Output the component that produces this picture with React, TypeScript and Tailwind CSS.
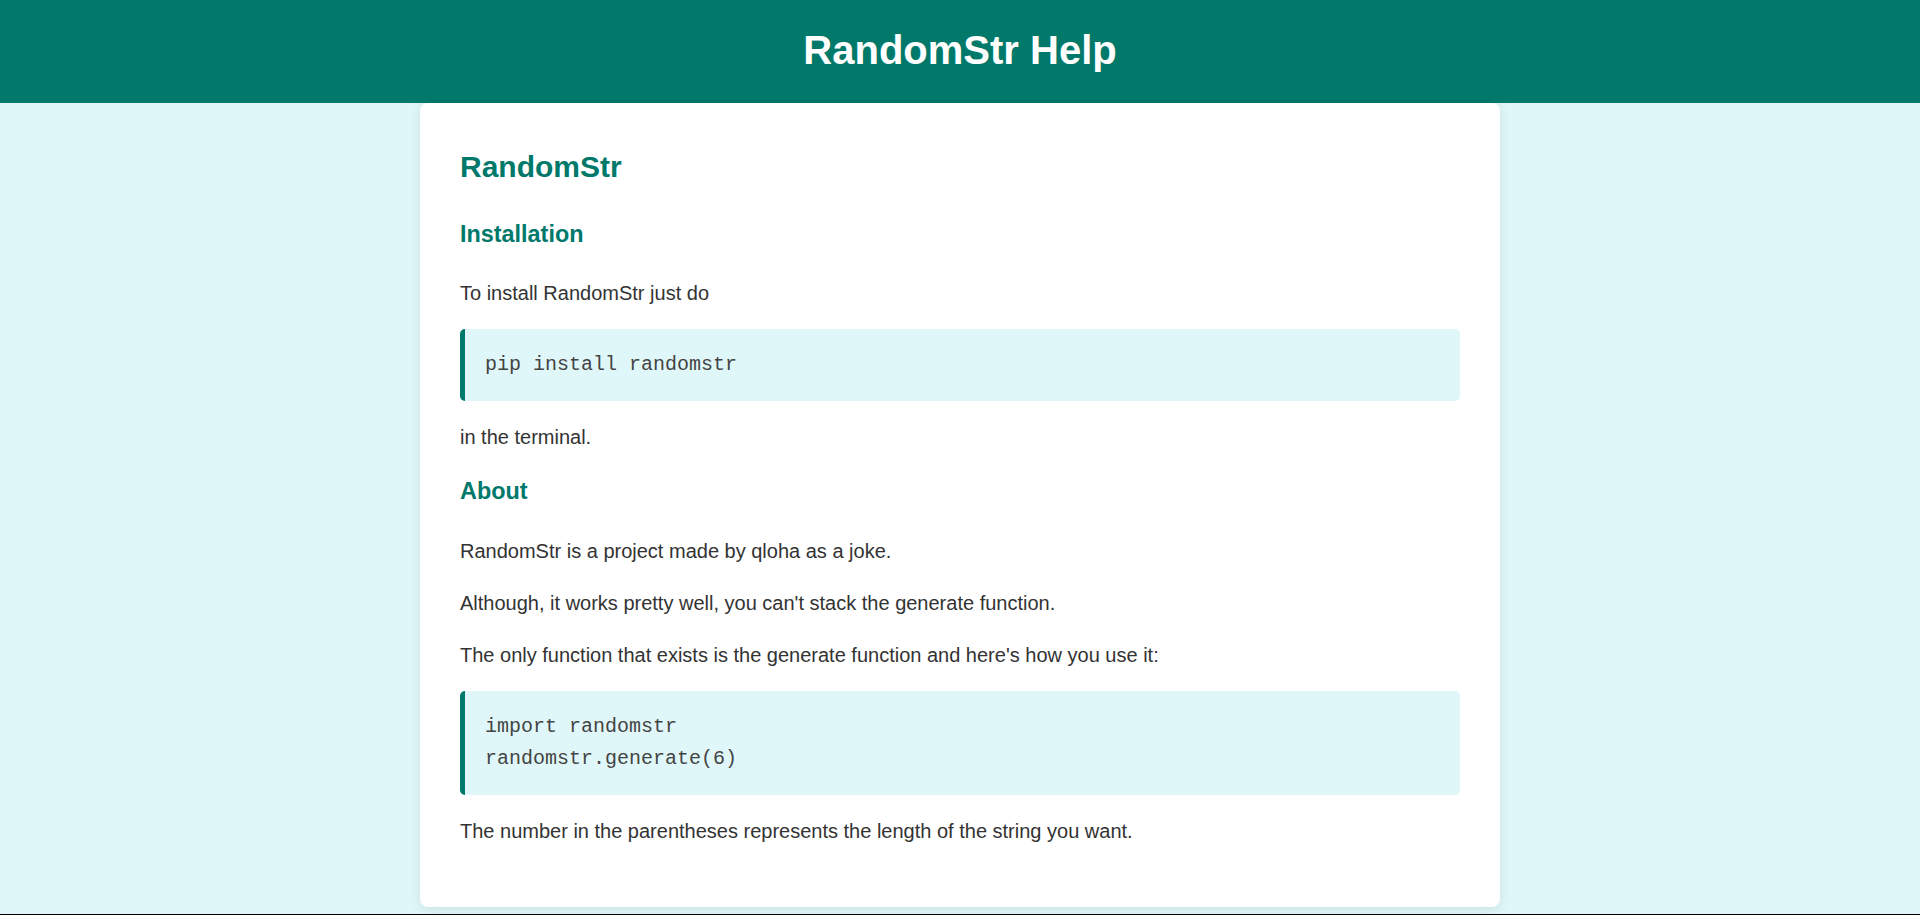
function CodeBlock({ lines }: { lines: string[] }) {
    return (
        <pre className="my-5 rounded-[5px] border-l-[5px] border-[#00796b] bg-[#e0f7fa] px-5 py-5 font-['Liberation_Mono','Courier_New',monospace] text-[20px] leading-[32px] text-[#444]">
            {lines.map((line) => (
                <div key={line}>{line}</div>
            ))}
        </pre>
    );
}

function App() {
    return (
        <div className="min-h-[915px] bg-[#e0f7fa] font-['Liberation_Sans',Arial,sans-serif] text-[20px] leading-[32px] text-[#333]">
            <header className="h-[103px] bg-[#00796b] pt-[18px] text-center">
                <h1 className="text-[40px] font-bold leading-[64px] text-white">RandomStr Help</h1>
            </header>

            <main className="mx-auto w-[1080px] rounded-[8px] bg-white p-10 shadow-[0_2px_12px_rgba(0,0,0,0.1)]">
                <h2 className="mb-[25px] text-[30px] font-bold leading-[48px] text-[#00796b]">RandomStr</h2>

                <h3 className="mt-5 mb-[25px] text-[23.4px] font-bold leading-[36px] text-[#00796b]">Installation</h3>
                <p className="my-5">To install RandomStr just do</p>
                <CodeBlock lines={["pip install randomstr"]} />
                <p className="my-5">in the terminal.</p>

                <h3 className="mt-5 mb-[26px] text-[23.4px] font-bold leading-[36px] text-[#00796b]">About</h3>
                <p className="my-5">RandomStr is a project made by qloha as a joke.</p>
                <p className="my-5">Although, it works pretty well, you can't stack the generate function.</p>
                <p className="my-5">The only function that exists is the generate function and here's how you use it:</p>
                <CodeBlock lines={["import randomstr", "randomstr.generate(6)"]} />
                <p className="my-5">The number in the parentheses represents the length of the string you want.</p>
            </main>

            <footer className="mt-[7px] h-[48px] bg-black" />
        </div>
    );
}

export default App;
